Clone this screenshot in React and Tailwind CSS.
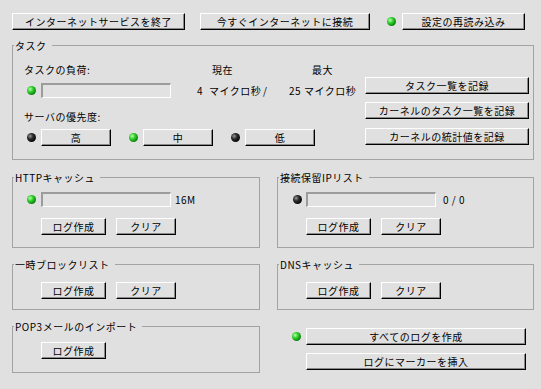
import React from 'react';

function Btn({ className = '', children }) {
  return (
    <button
      type="button"
      className={`h-[17px] flex items-center justify-center bg-[#e0e0e0] border border-t-white border-l-white border-b-black border-r-black shadow-[inset_-1px_-1px_0_#8a8a8a] text-black ${className}`}
    >
      {children}
    </button>
  );
}

function Led({ on, className = '' }) {
  return (
    <span
      className={`block w-[9px] h-[9px] rounded-full shrink-0 ${
        on
          ? 'bg-[radial-gradient(circle_at_35%_35%,#b8ffb0_0%,#2fd02a_35%,#0a7a0a_75%,#034003_100%)]'
          : 'bg-[radial-gradient(circle_at_35%_35%,#9a9a9a_0%,#2a2a2a_35%,#000_80%)]'
      } ${className}`}
    />
  );
}

function Bar({ className = '' }) {
  return (
    <div className={`w-[130px] h-[15px] shrink-0 bg-[#e2e2e2] border-t-2 border-l-2 border-t-[#9c9c9c] border-l-[#9c9c9c] border-b border-r border-b-white border-r-white ${className}`} />
  );
}

function Group({ title, className = '', children }) {
  return (
    <fieldset className={`border border-[#a3a3a3] min-w-0 ${className}`}>
      <legend className="ml-[1px] pl-[1px] pr-[5px] leading-[13px]">{title}</legend>
      {children}
    </fieldset>
  );
}

export default function App() {
  return (
    <div className="w-[541px] h-[389px] bg-[#e0e0e0] pl-3 pr-[7px] pt-[13px] text-[10px] leading-[13px] tracking-[0.5px] whitespace-nowrap text-black font-['Noto_Sans_CJK_JP','Noto_Sans',sans-serif] overflow-hidden">
      {/* 上のボタン列 */}
      <div className="flex items-center h-[17px]">
        <Btn className="w-[173px]">インターネットサービスを終了</Btn>
        <Btn className="w-[170px] ml-[15px]">今すぐインターネットに接続</Btn>
        <Led on className="ml-[17px]" />
        <Btn className="w-[123px] ml-[6px]">設定の再読み込み</Btn>
      </div>

      <Group title="タスク" className="mt-[9px] h-[121px]">
        <div className="flex justify-between pr-[4px] pt-[11px]">
          <div className="pl-[11px]">
            <div className="flex h-[13px]">
              <span className="w-[188px]">タスクの負荷:</span>
              <span className="w-[100px]">現在</span>
              <span>最大</span>
            </div>
            <div className="flex items-center mt-[7px] h-[15px]">
              <Led on className="ml-[3px]" />
              <Bar className="ml-[5px]" />
              <span className="w-[32px] shrink-0 text-right">4</span>
              <span className="w-[60px] shrink-0 pl-[6px]">マイクロ秒</span>
              <span className="w-[10px] shrink-0">/</span>
              <span className="w-[28px] shrink-0 text-right">25</span>
              <span className="pl-[3px]">マイクロ秒</span>
            </div>
            <div className="mt-[12px] h-[13px]">サーバの優先度:</div>
            <div className="flex items-center mt-[6px]">
              <Led className="ml-[3px]" />
              <Btn className="w-[70px] ml-[5px]">高</Btn>
              <Led on className="ml-[18px]" />
              <Btn className="w-[70px] ml-[5px]">中</Btn>
              <Led className="ml-[18px]" />
              <Btn className="w-[70px] ml-[5px]">低</Btn>
            </div>
          </div>
          <div className="flex flex-col pt-[14px] gap-[8px]">
            <Btn className="w-[164px]">タスク一覧を記録</Btn>
            <Btn className="w-[164px]">カーネルのタスク一覧を記録</Btn>
            <Btn className="w-[164px] mt-[1px]">カーネルの統計値を記録</Btn>
          </div>
        </div>
      </Group>

      <div className="grid grid-cols-[248px_257px] gap-x-[17px] mt-[11px]">
        <Group title="HTTPキャッシュ" className="h-[77px]">
          <div className="pl-[14px]">
            <div className="flex items-center mt-[8px]">
              <Led on />
              <Bar className="ml-[5px]" />
              <span className="ml-[4px]">16M</span>
            </div>
            <div className="flex mt-[11px] ml-[14px] gap-[10px]">
              <Btn className="w-[65px]">ログ作成</Btn>
              <Btn className="w-[60px]">クリア</Btn>
            </div>
          </div>
        </Group>
        <Group title="接続保留IPリスト" className="h-[77px]">
          <div className="pl-[15px]">
            <div className="flex items-center mt-[8px]">
              <Led />
              <Bar className="ml-[4px]" />
              <span className="ml-[7px]">0 / 0</span>
            </div>
            <div className="flex mt-[11px] ml-[13px] gap-[10px]">
              <Btn className="w-[65px]">ログ作成</Btn>
              <Btn className="w-[60px]">クリア</Btn>
            </div>
          </div>
        </Group>

        <Group title="一時ブロックリスト" className="h-[52px] mt-[10px]">
          <div className="flex mt-[11px] pl-[28px] gap-[10px]">
            <Btn className="w-[65px]">ログ作成</Btn>
            <Btn className="w-[60px]">クリア</Btn>
          </div>
        </Group>
        <Group title="DNSキャッシュ" className="h-[52px] mt-[10px]">
          <div className="flex mt-[11px] pl-[28px] gap-[10px]">
            <Btn className="w-[65px]">ログ作成</Btn>
            <Btn className="w-[60px]">クリア</Btn>
          </div>
        </Group>

        <Group title="POP3メールのインポート" className="h-[53px] mt-[10px]">
          <div className="flex mt-[9px] pl-[28px]">
            <Btn className="w-[65px]">ログ作成</Btn>
          </div>
        </Group>
        <div className="mt-[10px] pt-[8px] pl-[15px]">
          <div className="flex items-center">
            <Led on />
            <Btn className="w-[220px] ml-[5px]">すべてのログを作成</Btn>
          </div>
          <Btn className="w-[220px] ml-[14px] mt-[8px]">ログにマーカーを挿入</Btn>
        </div>
      </div>
    </div>
  );
}
